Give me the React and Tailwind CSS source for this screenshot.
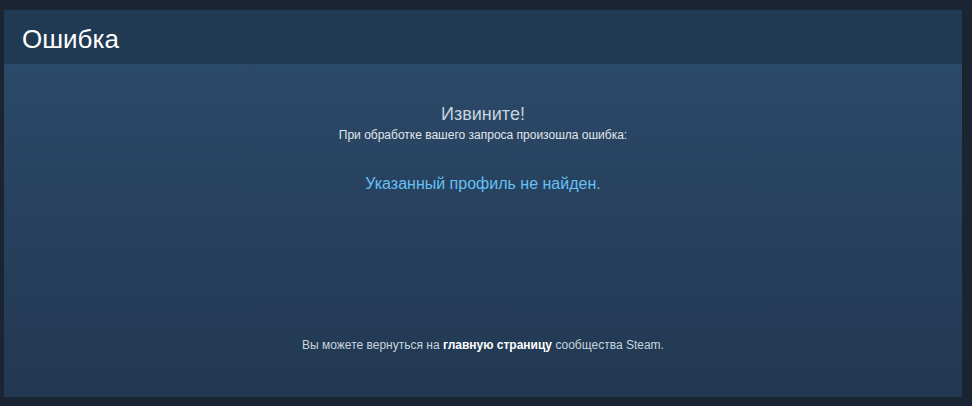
export default function App() {
  return (
    <div className="w-[972px] h-[406px] bg-[#1b2433] pt-[10px] pl-[4px] pr-[10px] pb-[9px] font-['Liberation_Sans',Arial,sans-serif]">
      <div className="flex flex-col h-full">
        <div className="h-[54px] bg-[#213a53] flex items-center px-[18px] pt-[3px]">
          <h1 className="text-[26px] leading-none text-white font-normal">Ошибка</h1>
        </div>
        <div className="flex-1 bg-gradient-to-b from-[#2b4968] to-[#223852] flex flex-col items-center text-center pt-[39px]">
          <div className="text-[18px] leading-[22px] text-[#c6d4df]">Извините!</div>
          <div className="mt-[2px] text-[12px] leading-[16px] text-[#e1e6ea]">При обработке вашего запроса произошла ошибка:</div>
          <div className="mt-[31px] text-[16px] leading-[20px] text-[#66c0f4]">Указанный профиль не найден.</div>
          <div className="mt-auto mb-[44px] text-[12px] leading-[16px] text-[#c6d4df]">
            Вы можете вернуться на <span className="font-bold text-white">главную страницу</span> сообщества Steam.
          </div>
        </div>
      </div>
    </div>
  );
}
